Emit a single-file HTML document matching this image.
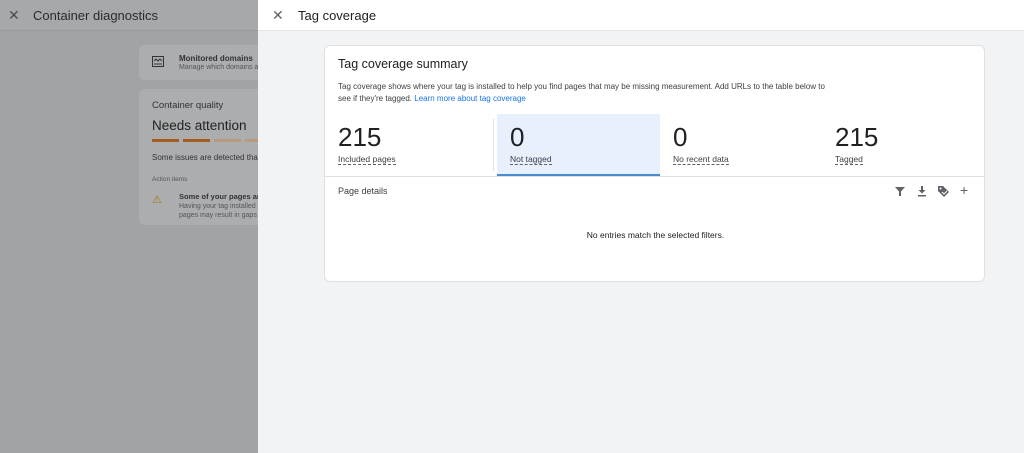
<!DOCTYPE html>
<html><head><style>
*{margin:0;padding:0;box-sizing:border-box}
body{width:1024px;height:453px;overflow:hidden;font-family:"Liberation Sans",Arial,sans-serif;background:#a2a3a5;position:relative;color:#202124}
.lh{position:absolute;left:0;top:0;width:258px;height:31px;background:#a7a8aa;border-bottom:1px solid #9a9b9d}
.abs{position:absolute}
.lc{position:absolute;background:#acadaf;border-radius:6px}
.rp{position:absolute;left:258px;top:0;width:766px;height:453px;background:#f1f3f4}
.rh{position:absolute;left:0;top:0;width:766px;height:31px;background:#fff;border-bottom:1px solid #e3e3e3}
.card{position:absolute;left:66px;top:45px;width:661px;height:237px;background:#fff;border:1px solid #e0e0e0;border-radius:6px;overflow:hidden}
.num{position:absolute;top:76px;font-size:26px;color:#202124;font-weight:300}
.lab{position:absolute;top:108px;font-size:8.5px;color:#3c4043;border-bottom:1px dashed #5f6368;line-height:10px}
</style></head><body>
<div class="lh"></div>
<div class="abs" style="left:8px;top:7px;font-size:14px;color:#4a4b4d">✕</div>
<div class="abs" style="left:33px;top:8px;font-size:13px;color:#2a2b2d">Container diagnostics</div>
<div class="lc" style="left:139px;top:45px;width:130px;height:35px"></div>
<svg class="abs" style="left:152px;top:56px" width="12" height="11" viewBox="0 0 12 11"><rect x="0.5" y="0.5" width="11" height="10" fill="none" stroke="#333" stroke-width="1"/><path d="M2 5l2-2 2 2 2-2 2 2M2 8h8" stroke="#333" fill="none"/></svg>
<div class="abs" style="left:179px;top:54px;font-size:8px;font-weight:bold;color:#333">Monitored domains</div>
<div class="abs" style="left:179px;top:64px;font-size:7px;color:#555">Manage which domains a</div>
<div class="lc" style="left:139px;top:89px;width:130px;height:136px"></div>
<div class="abs" style="left:152px;top:100px;font-size:9.5px;color:#333">Container quality</div>
<div class="abs" style="left:152px;top:118px;font-size:13.5px;color:#222">Needs attention</div>
<div class="abs" style="left:152px;top:139px;width:27px;height:3px;background:#a55d1e"></div>
<div class="abs" style="left:183px;top:139px;width:27px;height:3px;background:#a55d1e"></div>
<div class="abs" style="left:214px;top:139px;width:27px;height:3px;background:#b99a7c"></div>
<div class="abs" style="left:245px;top:139px;width:13px;height:3px;background:#b99a7c"></div>
<div class="abs" style="left:152px;top:153px;font-size:8px;color:#333">Some issues are detected that</div>
<div class="abs" style="left:152px;top:176px;font-size:6.5px;color:#555">Action items</div>
<div class="abs" style="left:152px;top:193px;font-size:11px;color:#a87a1a">⚠</div>
<div class="abs" style="left:179px;top:192px;font-size:7.5px;font-weight:bold;color:#333">Some of your pages ar</div>
<div class="abs" style="left:179px;top:202px;font-size:7px;color:#555;line-height:9px">Having your tag installed o<br>pages may result in gaps</div>
<div class="rp">
<div class="rh"></div>
<div class="abs" style="left:14px;top:7px;font-size:14px;color:#5f6368">✕</div>
<div class="abs" style="left:40px;top:8px;font-size:13px;color:#202124">Tag coverage</div>
<div class="card">
<div class="abs" style="left:13px;top:11px;font-size:12.5px;color:#202124">Tag coverage summary</div>
<div class="abs" style="left:13px;top:35px;font-size:8px;color:#3c4043;line-height:12px;width:500px">Tag coverage shows where your tag is installed to help you find pages that may be missing measurement. Add URLs to the table below to see if they're tagged. <span style="color:#1a73e8">Learn more about tag coverage</span></div>
<div class="abs" style="left:168px;top:73px;width:1px;height:52px;background:#e0e0e0"></div>
<div class="abs" style="left:172px;top:68px;width:163px;height:62px;background:#e8f0fe;border-bottom:2px solid #4b8bd4"></div>
<div class="num" style="left:13px">215</div><div class="lab" style="left:13px">Included pages</div>
<div class="num" style="left:185px">0</div><div class="lab" style="left:185px">Not tagged</div>
<div class="num" style="left:348px">0</div><div class="lab" style="left:348px">No recent data</div>
<div class="num" style="left:510px">215</div><div class="lab" style="left:510px">Tagged</div>
<div class="abs" style="left:0;top:130px;width:661px;height:1px;background:#e0e0e0"></div>
<div class="abs" style="left:13px;top:140px;font-size:9px;color:#3c4043">Page details</div>
<svg class="abs" style="left:569px;top:140px" width="12" height="11" viewBox="0 0 12 11"><path d="M1 1h10L7 5.5V10H5V5.5z" fill="#5f6368"/></svg>
<svg class="abs" style="left:591px;top:140px" width="12" height="11" viewBox="0 0 12 11"><path d="M5 0h2v4h2.5L6 7.5 2.5 4H5zM2 9h8v1.5H2z" fill="#5f6368"/></svg>
<svg class="abs" style="left:612px;top:139px" width="13" height="12" viewBox="0 0 13 12"><path d="M1 1h5l6 6-5 5-6-6z" fill="#5f6368"/><circle cx="3.5" cy="3.5" r="1" fill="#fff"/><path d="M5 7l2 2 3-3" stroke="#fff" fill="none"/></svg>
<div class="abs" style="left:635px;top:136px;font-size:14px;color:#5f6368">+</div>
<div class="abs" style="left:0;top:184px;width:661px;text-align:center;font-size:8.5px;color:#202124">No entries match the selected filters.</div>
</div>
</div>
</body></html>
